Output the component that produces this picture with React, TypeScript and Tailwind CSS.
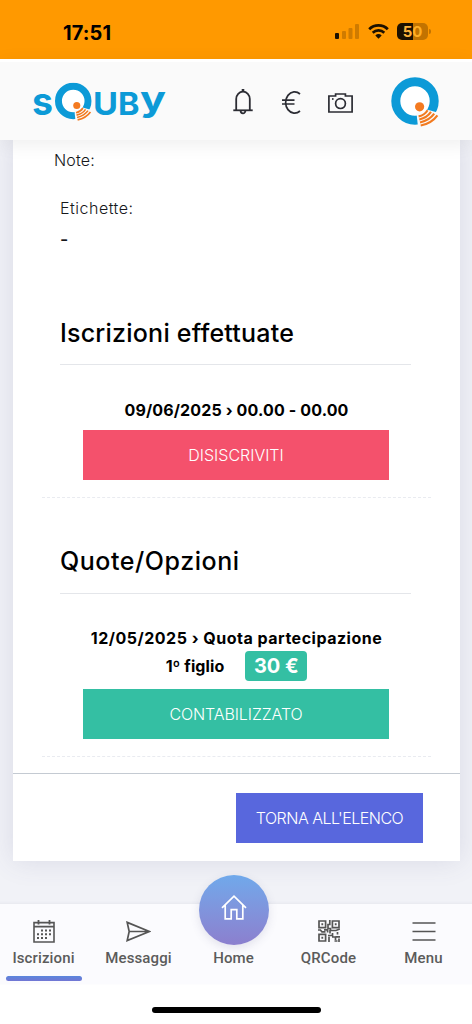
import type { ReactNode } from 'react';

type NavItemProps = {
  label: string;
  icon: ReactNode;
  active?: boolean;
};

type ActionButtonProps = {
  label: string;
  className: string;
};

function StatusBar() {
  return (
    <div className="flex h-[59px] items-start justify-between bg-[#ff9900] pr-[41px] pl-[63px] text-black">
      <span className="mt-[21px] font-['Inter'] text-[20px] leading-6 font-bold tracking-[0.1px]">17:51</span>
      <div className="mt-[23px] flex items-center">
        <svg width="25" height="17" viewBox="0 0 25 17">
          <rect x="0" y="10" width="4" height="6" rx="1" fill="#1c1100" />
          <rect x="7" y="8" width="4" height="8" rx="1" fill="#cf7b00" />
          <rect x="13.5" y="5" width="4" height="11" rx="1" fill="#cf7b00" />
          <rect x="20" y="1" width="4" height="15" rx="1" fill="#cf7b00" />
        </svg>
        <svg className="ml-[8px]" width="21" height="17" viewBox="0 0 21 17" fill="none" stroke="#1c1100">
          <path d="M1.2 6.2a13.4 13.4 0 0 1 18.6 0" strokeWidth="2.8" />
          <path d="M4.7 9.7a8.4 8.4 0 0 1 11.6 0" strokeWidth="2.6" />
          <path d="M7.3 12.4a4.8 4.8 0 0 1 6.4 0L10.5 15.8Z" fill="#1c1100" stroke="none" />
        </svg>
        <div className="ml-[8px] flex h-[17px] w-[31px] items-center justify-center rounded-[5px] bg-[linear-gradient(90deg,#1c1100_50%,#c27300_50%)] font-['Inter'] text-[15px] leading-[17px] font-bold">
          <span className="text-[#ffb43c]">5</span>
          <span className="text-[#ffae24]">0</span>
        </div>
        <span className="ml-[1px] h-[5px] w-[2px] rounded-r bg-[#c27300]" />
      </div>
    </div>
  );
}

/* Ring with the orange signal waves that leave it at the lower right. */
function RingMark() {
  return (
    <>
      <circle cx="24" cy="24" r="19.2" fill="white" stroke="#0c9ad7" strokeWidth="9" />
      <path d="M27 30L50 36.5L50 52L27.2 52L25.5 36Z" fill="#fafafa" />
      <path d="M25.6 35.5A14.8 14.8 0 0 0 37 31L28 24Z" fill="white" />
      <g fill="none" stroke="#f27a1f" strokeWidth="2.1">
        <path d="M27.6 39.4Q33.6 38.2 36.6 33.2" />
        <path d="M28.3 42.4Q36.2 40.6 40 34.9" />
        <path d="M29 45.4Q38.6 43.2 43.2 36.6" />
        <path d="M29.7 48.6Q41 46 46.4 38.3" />
      </g>
      <circle cx="28.6" cy="29.8" r="4.6" fill="#f47a20" />
    </>
  );
}

function Wordmark() {
  return (
    <svg
      width="140"
      height="60"
      viewBox="0 -10 140 60"
      fill="#0c9ad7"
      fontFamily="Inter, sans-serif"
      fontWeight="700"
    >
      <text x="0" y="33" fontSize="39" textLength="21" lengthAdjust="spacingAndGlyphs">s</text>
      <svg x="22.5" y="0.5" width="39" height="40" viewBox="0 0 50 52">
        <RingMark />
      </svg>
      <text x="61" y="33" fontSize="31.5" textLength="25" lengthAdjust="spacingAndGlyphs">U</text>
      <text x="86" y="33" fontSize="31.5" textLength="21.5" lengthAdjust="spacingAndGlyphs">B</text>
      <text x="108" y="29" fontSize="35" textLength="26" lengthAdjust="spacingAndGlyphs">y</text>
    </svg>
  );
}

function Header() {
  return (
    <header className="relative z-10 flex h-[81px] shrink-0 items-start border-t-[3px] border-white bg-[#fafafa] pr-[31px] pl-[32px] shadow-[0_4px_18px_rgba(0,0,0,0.07)]">
      <div className="mt-[10px]">
        <Wordmark />
      </div>
      <svg className="mt-[27px] ml-[61px]" width="20" height="27" viewBox="0 0 20 27" fill="none" stroke="#2b2c33" strokeWidth="1.8">
        <path d="M3.2 21V10A6.8 7.4 0 0 1 16.8 10V21" />
        <path d="M0.3 21.3H19.7" />
        <path d="M10 0V3" strokeWidth="2.6" />
        <path d="M7.6 21.5A2.4 2.9 0 1 0 12.4 21.5" />
      </svg>
      <svg className="mt-[28px] ml-[29px]" width="19" height="25" viewBox="0 0 19 25" fill="none" stroke="#2b2c33" strokeWidth="1.7">
        <path d="M18 4A9 10.6 0 1 0 18 21" />
        <path d="M0 10.2H12.5M0 14H12.5" />
      </svg>
      <svg className="mt-[31px] ml-[27px]" width="25" height="20" viewBox="0 0 25 20" fill="none" stroke="#2b2c33" strokeWidth="1.7">
        <path d="M.9 3H7.6V1H17.4V3H24.1V19H.9Z" />
        <circle cx="12.5" cy="10.6" r="4.9" />
        <circle cx="4.8" cy="6" r=".9" fill="#2b2c33" stroke="none" />
      </svg>
      <svg className="mt-[15px] ml-auto" width="50" height="52" viewBox="0 0 50 52">
        <RingMark />
      </svg>
    </header>
  );
}

function ActionButton({ label, className }: ActionButtonProps) {
  return (
    <button className={`flex h-[50px] shrink-0 items-center justify-center text-[16px] font-light text-white ${className}`}>
      {label}
    </button>
  );
}

function EventCard() {
  return (
    <main className="mr-[12px] ml-[13px] flex h-[721px] flex-col bg-white font-['Inter'] text-[#16181b] shadow-[0_0_26px_rgba(80,80,130,0.14)]">
      <p className="mt-[8px] ml-[41px] text-[16px] leading-6 font-light tracking-[0.2px]">Note:</p>
      <p className="mt-[24px] ml-[47px] text-[16px] leading-6 font-light tracking-[0.5px]">Etichette:</p>
      <p className="mt-[8px] ml-[47px] text-[18px] leading-6 font-medium">-</p>

      <h2 className="mt-[65px] ml-[47px] text-[25px] leading-8 font-medium tracking-[0.22px] text-black">
        Iscrizioni effettuate
      </h2>
      <div className="mt-[15px] mr-[49px] ml-[47px] border-t border-[#e4e6ea]" />
      <div className="mt-[33px] flex h-6 items-center justify-center text-[16px] font-bold whitespace-nowrap text-black">
        <span className="tracking-[0.13px]">09/06/2025 › 00.00 - 00.00</span>
      </div>
      <ActionButton label="DISISCRIVITI" className="mt-[8px] mr-[71px] ml-[70px] bg-[#f4516c]" />
      <div className="mt-[17px] mr-[29px] ml-[29px] border-t border-dashed border-[#e9ebf0]" />

      <h2 className="mt-[47px] ml-[47px] text-[25px] leading-8 font-medium tracking-[0.55px] text-black">
        Quote/Opzioni
      </h2>
      <div className="mt-[16px] mr-[49px] ml-[47px] border-t border-[#e4e6ea]" />
      <div className="mt-[30px] flex flex-col items-center text-[16px] font-bold whitespace-nowrap text-black">
        <span className="h-[27px] leading-[28px] tracking-[0.5px]">12/05/2025 › Quota partecipazione</span>
        <div className="flex h-[30px] items-start">
          <span className="leading-[30px] tracking-[0.1px]">1º figlio</span>
          <span className="ml-[21px] flex h-[30px] w-[62px] items-center justify-center rounded-[4px] bg-[#34bfa3] text-[20px] text-white">
            30 €
          </span>
        </div>
      </div>
      <ActionButton label="CONTABILIZZATO" className="mt-[8px] mr-[71px] ml-[70px] bg-[#34bfa3] tracking-[-0.1px]" />
      <div className="mt-[17px] mr-[29px] ml-[29px] border-t border-dashed border-[#e9ebf0]" />

      <footer className="mt-[16px] flex border-t border-[#c4cad2] pt-[19px] pr-[37px]">
        <ActionButton label="TORNA ALL'ELENCO" className="ml-auto w-[187px] bg-[#5867dd] tracking-[-0.5px]" />
      </footer>
    </main>
  );
}

function NavItem({ label, icon, active = false }: NavItemProps) {
  return (
    <div className="flex w-[95px] shrink-0 flex-col items-center">
      <div className="flex h-[44px] shrink-0 items-center justify-center pt-[10px]">{icon}</div>
      <span className="h-[28px] leading-[20px] tracking-[0.12px]">{label}</span>
      {active ? (
        <span className="h-[5px] w-[76px] rounded-full bg-linear-to-b from-[#5a86dc] to-[#7176d4]" />
      ) : null}
    </div>
  );
}

function CalendarIcon() {
  return (
    <svg width="22" height="23" viewBox="0 0 22 23" fill="none" stroke="#555" strokeWidth="1.6">
      <path d="M1 2.6H21V22H1ZM1 6.6H21" />
      <path d="M5.5 0V4.6M16.5 0V4.6" strokeWidth="1.8" />
      <path d="M8 10.5H18M4 14.2H18M4 18H14" strokeWidth="2" strokeDasharray="2 2" />
    </svg>
  );
}

function QrIcon() {
  return (
    <svg width="22" height="22" viewBox="0 0 22 22" fill="none" stroke="#555" strokeWidth="1.7">
      <path d="M1 1H7.6V7.6H1ZM14.4 1H21V7.6H14.4ZM1 14.4H7.6V21H1Z" />
      <path d="M3.4 4.3H5.2M16.8 4.3H18.6M3.4 17.7H5.2" strokeWidth="1.9" />
      <path d="M11.8 0V4.5H10V8.5H12.5V10.7M0 10H2.4L4 11.8H7.5M6 9.8H9.6V12.5M12 13.5V10.5H18L21.8 9M19.5 12V14.5M10 15.5H14.5V13M11 22V16.8M14 17H17.5V20M17.5 16.8H22M16.5 21H19.5M21 18.5V22" />
    </svg>
  );
}

function BottomNav() {
  return (
    <nav className="relative z-10 -ml-[4px] flex h-[80px] w-[480px] shrink-0 bg-[#fbfbfe] font-['Roboto'] text-[15px] font-medium text-[#5b5b5b] shadow-[0_-1px_3px_rgba(70,70,110,0.06)]">
      <NavItem label="Iscrizioni" icon={<CalendarIcon />} active />
      <NavItem
        label="Messaggi"
        icon={
          <svg width="25" height="21" viewBox="0 0 25 21" fill="none" stroke="#555" strokeWidth="1.7">
            <path d="M1.2 1.4L23.4 10.5L1.2 19.6L3.2 10.5ZM3.2 10.5H23" />
          </svg>
        }
      />
      <NavItem
        label="Home"
        icon={
          <div className="-mt-[42px] flex h-[70px] w-[70px] shrink-0 items-center justify-center rounded-full bg-linear-to-b from-[#6fa9eb] to-[#8b7fce] shadow-[0_3px_10px_rgba(80,80,130,0.15)]">
            <svg className="mt-[-5px]" width="26" height="25" viewBox="0 0 26 25" fill="none" stroke="#fff" strokeWidth="1.7">
              <path d="M1 12.8L13 1.2L25 12.8M4.2 10V23.8H10.2V14.6H15.8V23.8H21.8V10" />
            </svg>
          </div>
        }
      />
      <NavItem label="QRCode" icon={<QrIcon />} />
      <NavItem
        label="Menu"
        icon={
          <svg width="24" height="19" viewBox="0 0 24 19" stroke="#555" strokeWidth="1.6">
            <path d="M.5 1H23.5M.5 9.5H23.5M.5 18H23.5" />
          </svg>
        }
      />
    </nav>
  );
}

export default function App() {
  return (
    <div className="flex h-[1024px] w-[472px] flex-col overflow-hidden bg-white">
      <StatusBar />
      <Header />
      <div className="h-[764px] shrink-0 bg-[#f1f2f7]">
        <EventCard />
      </div>
      <BottomNav />
      <div className="flex h-[40px] items-start justify-center bg-white pt-[23px]">
        <span className="h-[6px] w-[169px] rounded-full bg-black" />
      </div>
    </div>
  );
}
